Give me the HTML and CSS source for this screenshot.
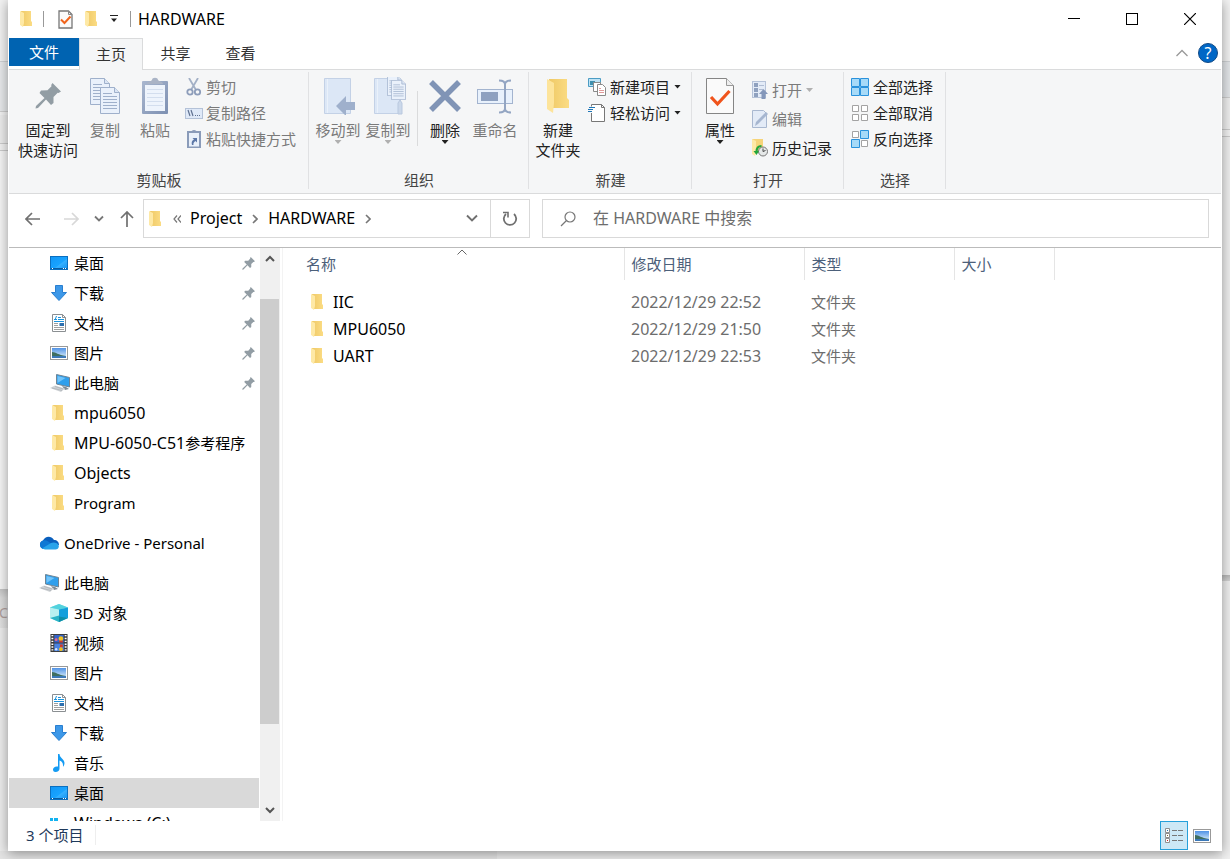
FILE: index.html
```html
<!DOCTYPE html>
<html lang="zh-CN">
<head>
<meta charset="utf-8">
<title>HARDWARE</title>
<link rel="stylesheet" href="styles.css">
</head>
<body>
<svg class="defs" width="0" height="0" aria-hidden="true">
  <defs>
    <linearGradient id="gFold" x1="0" x2="1"><stop offset="0" stop-color="#efc966"/><stop offset="1" stop-color="#fbdc84"/></linearGradient>
    <linearGradient id="gDesk" x1="0" y1="0" x2="1" y2="1"><stop offset="0" stop-color="#1296f5"/><stop offset=".55" stop-color="#18a3ff"/><stop offset=".6" stop-color="#34b0ff"/><stop offset="1" stop-color="#0f8ff0"/></linearGradient>
    <linearGradient id="gSky" x1="0" y1="0" x2="0" y2="1"><stop offset="0" stop-color="#4f92e6"/><stop offset="1" stop-color="#e4f3fb"/></linearGradient>
    <linearGradient id="gClip" x1="0" y1="0" x2="1" y2="1"><stop offset="0" stop-color="#a9b7cf"/><stop offset="1" stop-color="#7d90b2"/></linearGradient>
  </defs>
  <symbol id="folder" viewBox="0 0 14 18"><path d="M2 1h10v10l1 1v4H3z" fill="url(#gFold)"/><path d="M1 1l4 2v10l-1 4-3-2z" fill="#fee9a6"/></symbol>
  <symbol id="desktop" viewBox="0 0 18 14"><rect x=".5" y=".5" width="17" height="13" fill="url(#gDesk)" stroke="#0a6fc0"/><path d="M1 12.5h16" stroke="#0b5ca0"/><path d="M2 12.5h1M13 12.5h1M15 12.5h1" stroke="#fff"/></symbol>
  <symbol id="down" viewBox="0 0 18 18"><path d="M5.500 1.500h7v7h4L9 16.500 1.500 8.500h4z" fill="#3d98e8" stroke="#2a7fd0"/></symbol>
  <symbol id="doc" viewBox="0 0 18 18"><path d="M2.500.5h10l3 3v14h-13z" fill="#fff" stroke="#8b8f92"/><path d="M12.500.5v3h3" fill="none" stroke="#8b8f92"/><path d="M8 3.500h3M4 5.500h3M8 5.500h6M4 7.500h10M6.500 2L5 6" stroke="#1c93dc"/><path d="M4 9.500h4M4 11.500h4M4 13.500h10M4 15.500h10" stroke="#a0a0a0"/><rect x="9.500" y="9" width="4.500" height="3" fill="#2d6fae"/></symbol>
  <symbol id="pic" viewBox="0 0 18 14"><rect x=".5" y=".5" width="17" height="13" fill="#fff" stroke="#999"/><rect x="2" y="2" width="14" height="10" fill="url(#gSky)"/><path d="M2 6c4 0 6 3 14 4H2z" fill="#3f6e60"/><path d="M2 10h14v2H2z" fill="#3b78b8"/></symbol>
  <symbol id="pc" viewBox="0 0 20 18"><path d="M6.500.5l13 3v9.500l-13-3z" fill="#2f9fec" stroke="#6f8494"/><path d="M7.500 2l8 2-8 5z" fill="#72c4fa"/><path d="M12 12l4 1 3 2-4 1z" fill="#7e8a94"/><path d="M0 14l5-2.500 10 3L11 18z" fill="#cfd3d6"/><path d="M2 14l10 2.500M5 12.500l8 2.500" stroke="#a7adb3" stroke-width=".7"/></symbol>
  <symbol id="pin" viewBox="0 0 26 26"><path d="M17.500 0L26 8.500l-2.500 1.500-.8-.2-4.200 4.200 0 6-2.500 2-5-5.500L3 25l-2.500.5L1 23l8.500-8L4.500 10l1.500-2.500 6.500-.2L16.500 3.200l-.3-1.200z" fill="#929da4"/></symbol>
  <symbol id="cube" viewBox="0 0 18 18"><path d="M9 0l9 3.500v10.500l-9 4-9-4V3.500z" fill="#8fe3ea"/><path d="M0 3.500l9 2V13l-9 1z" fill="#b8f0f0"/><path d="M0 3.500L9 0l9 3.500-9 2z" fill="#53d2dd"/><path d="M0 14l9-2.500 9 2.500-9 4z" fill="#2ab4c6"/><path d="M9 12v6l9-4-4-1.500z" fill="#0f8ea8"/><path d="M9 5.500l9-2v10.500l-9-1.500z" fill="#149fdc"/></symbol>
  <symbol id="film" viewBox="0 0 18 19"><rect width="18" height="19" fill="#3b3b3b"/><path d="M2 1v18M16 1v18" stroke="#fff" stroke-width="2" stroke-dasharray="1.500 1.500"/><rect x="4" y="1" width="10" height="8" fill="#3463c8"/><rect x="4" y="10" width="10" height="8" fill="#4a83e0"/><circle cx="11" cy="5" r="2.500" fill="#f0c020"/><path d="M9 7h4v2H9z" fill="#d03a2a"/><circle cx="6" cy="6" r="1.500" fill="#e86a8a"/><path d="M10 11h3v3h-3z" fill="#d03a2a"/><circle cx="11" cy="16" r="2" fill="#f0c020"/><circle cx="6" cy="16" r="1.300" fill="#cfe2ff"/></symbol>
  <symbol id="note" viewBox="0 0 14 18"><path d="M6 0h1.500c0 4 5 5 5 9 0 2-1 3-1.500 4 .3-4-1-5.500-3.500-6.500v8c0 2-1.500 3.500-4 3.500C1.500 18 1 16.500 1 15.500 1 13.500 3 12 6 12.500z" fill="#149bf3"/></symbol>
  <symbol id="cloud" viewBox="0 0 20 14"><path d="M5 13a5 4.500 0 0 1-1-8.500C6 0 12-1 15 4c3 0 5 2 5 5z" fill="#0a5fbd"/><path d="M4 4.500c3-1 5 .5 8 3L6 13H4A4.500 4.500 0 0 1 4 4.500z" fill="#0f78d4"/><path d="M3 12.500L12 7c2-1 6-1 7.500 2 1 3-1 4.500-3 4.500H6z" fill="#28a3ea"/></symbol>
  <symbol id="check" viewBox="0 0 28 36"><path d="M.5.5h20l7 7v28H.5z" fill="#fafafa" stroke="#858585"/><path d="M20.500.5v7h7" fill="#eee" stroke="#999"/><path d="M5 19l6.500 7L23.500 13" fill="none" stroke="#f0541c" stroke-width="3.200"/></symbol>
  <symbol id="check-small" viewBox="0 0 15 19"><path d="M1 1h9.500L14 4.500V18H1z" fill="#fafafa" stroke="#777" stroke-width="1.300"/><path d="M10.500 1v3.500H14" fill="none" stroke="#888"/><path d="M3 9.500l3.500 3.500 6-6.500" fill="none" stroke="#f0641c" stroke-width="2"/></symbol>
  <symbol id="sheet" viewBox="0 0 20 27"><path d="M.5.5h14l5 5v21H.5z" fill="#eaf1fb" stroke="#9fb0cb"/><path d="M14.500.5v5h5" fill="#dbe5f4" stroke="#9fb0cb"/><path d="M3 6.500h9M3 9.500h14M3 12.500h14M3 15.500h14M3 18.500h14M3 21.500h14" stroke="#9fb0cb"/></symbol>
</svg>

<div class="backdrop" aria-hidden="true">
  <div class="strip left"><span>C</span></div>
  <div class="strip right"></div>
  <div class="strip bottom"></div>
</div>

<main class="window">
  <header class="titlebar">
    <svg class="i-folder"><use href="#folder"/></svg>
    <i class="bar"></i>
    <button class="plain qa" aria-label="属性"><svg class="i-check-s"><use href="#check-small"/></svg></button>
    <button class="plain qa2" aria-label="新建文件夹"><svg class="i-folder"><use href="#folder"/></svg></button>
    <button class="plain qa3" aria-label="自定义"><svg width="8" height="8" viewBox="0 0 8 8"><path d="M0 .5h8" stroke="#222"/><path d="M1 3.500h6L4 7z" fill="#222"/></svg></button>
    <i class="bar last"></i>
    <h1 class="en">HARDWARE</h1>
    <div class="controls">
      <button class="plain" aria-label="最小化"><svg width="12" height="12"><path d="M0 5.500h12" stroke="#000"/></svg></button>
      <button class="plain" aria-label="最大化"><svg width="12" height="12"><rect x=".5" y=".5" width="11" height="11" fill="none" stroke="#000"/></svg></button>
      <button class="plain" aria-label="关闭"><svg width="12" height="12"><path d="M0 0l12 12M12 0L0 12" stroke="#000" stroke-width="1.200"/></svg></button>
    </div>
  </header>

  <nav class="tabs">
    <button class="tab file">文件</button>
    <button class="tab active">主页</button>
    <button class="tab">共享</button>
    <button class="tab">查看</button>
    <div class="tab-tools">
      <button class="plain" aria-label="折叠"><svg width="12" height="8"><path d="M.5 7L6 1.500 11.500 7" fill="none" stroke="#999" stroke-width="1.300"/></svg></button>
      <button class="help" aria-label="帮助">?</button>
    </div>
  </nav>

  <section class="ribbon">
    <div class="group g1">
      <div class="tools">
        <button class="big wide"><span class="pic"><svg width="26" height="26"><use href="#pin"/></svg></span>固定到<br>快速访问</button>
        <button class="big off"><span class="pic"><svg width="32" height="38"><use href="#sheet" width="20" height="27" x="1" y="1"/><use href="#sheet" width="20" height="27" x="11" y="10"/></svg></span>复制</button>
        <button class="big off"><span class="pic"><svg width="28" height="38"><rect x="1" y="4" width="26" height="33" rx="1" fill="url(#gClip)"/><rect x="4" y="8" width="20" height="26" fill="#eef4fc"/><path d="M6 12.500h16M6 16.500h16M6 20.500h16M6 24.500h16M6 28.500h16" stroke="#d3deee"/><path d="M6 7c0-3 4-2 5-4 0-3 6-3 6 0 1 2 5 1 5 4z" fill="#aab4c6"/></svg></span>粘贴</button>
        <div class="stack">
          <button class="small off"><svg width="18" height="18" viewBox="0 0 18 18"><path d="M4 0l7 12M13 0L6 12" stroke="#a3b0c6" stroke-width="1.800"/><circle cx="5" cy="14" r="2.700" fill="none" stroke="#8d9dba" stroke-width="1.800"/><circle cx="12.500" cy="14" r="2.700" fill="none" stroke="#8d9dba" stroke-width="1.800"/></svg>剪切</button>
          <button class="small off"><svg width="18" height="18" viewBox="0 0 18 18"><rect x=".5" y="4.500" width="17" height="10" fill="#dfe9f8" stroke="#b4c2d8"/><path d="M3 6l2 6M6 6l2 6M10 11.500h1M12 11.500h1M14 11.500h1" stroke="#5f7191" stroke-width="1.200"/></svg>复制路径</button>
          <button class="small off"><svg width="18" height="18" viewBox="0 0 18 18"><path d="M3 2h12v15.500H3z" fill="#e9f0fa" stroke="#8a9bb9" stroke-width="2"/><path d="M6 3c0-4 6-4 6 0z" fill="#8a9bb9"/><path d="M7 15c-1-4 1-5 2-5.500L7.500 8H12v4.500L10.500 11C9 12 8 13 8.500 15z" fill="#5d78a8"/></svg>粘贴快捷方式</button>
        </div>
      </div>
      <h2>剪贴板</h2>
    </div>

    <div class="group g2">
      <div class="tools">
        <button class="big off"><span class="pic"><svg width="34" height="38"><path d="M3.500 1.500h26v35h-26z" fill="#dce7f6" stroke="#c3d1e6"/><path d="M6.500 2v34" stroke="#eaf1fa"/><path d="M34 25v8h-9v6L15 29l10-10v6z" fill="#9fb0cc"/></svg></span>移动到<i class="caret"></i></button>
        <button class="big off"><span class="pic"><svg width="36" height="38"><path d="M4.500 1.500h26v35h-26z" fill="#dce7f6" stroke="#c3d1e6"/><path d="M7.500 2v34" stroke="#eaf1fa"/><path d="M28 26l2-3 2 3v11h-4z" fill="#cbd8ea" stroke="#b9c8df"/><use href="#sheet" width="15" height="20" x="17" y="-1"/><use href="#sheet" width="15" height="20" x="21" y="3"/></svg></span>复制到<i class="caret"></i></button>
        <i class="divide"></i>
        <button class="big"><span class="pic"><svg width="34" height="34"><path d="M3 3l28 28M31 3L3 31" stroke="#8094b6" stroke-width="5.500"/></svg></span>删除<i class="caret"></i></button>
        <button class="big off"><span class="pic"><svg width="38" height="36"><rect x="1.500" y="11.500" width="35" height="14" fill="#e8f1fc" stroke="#a3b4cf"/><path d="M5 14h17v9H5z" fill="#8ea1c0"/><path d="M23 2.500c4 0 6 1 6 4v24c0 3-2 4-6 4M35 2.500c-4 0-6 1-6 4v24c0 3 2 4 6 4" fill="none" stroke="#93a5c2" stroke-width="2"/></svg></span>重命名</button>
      </div>
      <h2>组织</h2>
    </div>

    <div class="group g3">
      <div class="tools">
        <button class="big"><span class="pic"><svg width="27" height="36"><path d="M4 1h18v19l2 2v8H5z" fill="url(#gFold)"/><path d="M2 1l7 4v20l-1 10-6-4z" fill="#fde49b"/></svg></span>新建<br>文件夹</button>
        <div class="stack">
          <button class="small"><svg width="18" height="18" viewBox="0 0 18 18"><path d="M.5.5h12v8H.5z" fill="#bfe3f5" stroke="#4b9cc4"/><path d="M2 3h5v4H2z" fill="#3f8fae"/><path d="M5.500 4.500h7v9h-7z" fill="#fff" stroke="#8a8a8a"/><path d="M9.500 6.500h5l3 3v8h-8z" fill="#fff" stroke="#8a8a8a"/><path d="M11 10.500h2M11 12.500h5M11 14.500h5" stroke="#e09a9a"/></svg>新建项目<i class="caret after"></i></button>
          <button class="small"><svg width="18" height="18" viewBox="0 0 18 18"><path d="M3.500 2.500V.5h10l3 3v14h-13V9" fill="#fff" stroke="#777"/><path d="M13.500.5v3h3" fill="none" stroke="#777"/><path d="M1 3.500h6M0 5.500h5M0 7.500h4" stroke="#1f77b8"/></svg>轻松访问<i class="caret after"></i></button>
        </div>
      </div>
      <h2>新建</h2>
    </div>

    <div class="group g4">
      <div class="tools">
        <button class="big"><span class="pic"><svg width="28" height="36"><use href="#check"/></svg></span>属性<i class="caret"></i></button>
        <div class="stack tall">
          <button class="small off"><svg width="16" height="18" viewBox="0 0 16 18"><rect x=".5" y=".5" width="13" height="16" fill="#e3ebf7" stroke="#b5c2d8"/><path d="M2 2h4v4H2zM2 7h4v4H2zM2 12h4v4H2z" fill="#8fa1bf"/><path d="M7 4.500h5M7 8.500h4" stroke="#b0bdd3"/><path d="M11.500 8l4.500 5h-2.500v5h-4v-5H7z" fill="#8497ba"/></svg>打开<i class="caret after"></i></button>
          <button class="small off"><svg width="16" height="18" viewBox="0 0 16 18"><path d="M.5.5h11l3 3v14H.5z" fill="#e3ebf7" stroke="#a9b8d0"/><path d="M3 16l1-4L14 2l2 2L6 14z" fill="#a6b6d0"/></svg>编辑</button>
          <button class="small"><svg width="16" height="18" viewBox="0 0 16 18"><path d="M0 0h11v14H2z" fill="#f6d47a"/><path d="M0 0l4 2v12l-1 3-3-2z" fill="#fee9a6"/><circle cx="11" cy="12.500" r="4.500" fill="#e5e8e8" stroke="#777"/><path d="M11 9.500v3l2.500-1" fill="none" stroke="#444"/><path d="M4.500 13c0-4 2-6 5-6" fill="none" stroke="#22a53b" stroke-width="2.200"/><path d="M1.500 12H7l-2.500 4z" fill="#22a53b"/></svg>历史记录</button>
        </div>
      </div>
      <h2>打开</h2>
    </div>

    <div class="group g5">
      <div class="tools">
        <div class="stack">
          <button class="small"><svg width="18" height="18"><path d="M.5.5h8v8h-8zM9.500.5h8v8h-8zM.5 9.500h8v8h-8zM9.500 9.500h8v8h-8z" fill="#a6daf8" stroke="#2a92dc"/></svg>全部选择</button>
          <button class="small"><svg width="18" height="18"><path d="M1.500 1.500h6v6h-6zM10.500 1.500h6v6h-6zM1.500 10.500h6v6h-6zM10.500 10.500h6v6h-6z" fill="#fff" stroke="#a3a3a3"/></svg>全部取消</button>
          <button class="small"><svg width="18" height="18"><path d="M1.500 1.500h6v6h-6zM10.500 10.500h6v6h-6z" fill="#fff" stroke="#a3a3a3"/><path d="M9.500.5h8v8h-8zM.5 9.500h8v8h-8z" fill="#a6daf8" stroke="#2a92dc"/></svg>反向选择</button>
        </div>
      </div>
      <h2>选择</h2>
    </div>
  </section>

  <div class="navrow">
    <div class="arrows">
      <button class="plain" aria-label="后退"><svg width="16" height="14"><path d="M1 7h14M7 1L1 7l6 6" fill="none" stroke="#707070" stroke-width="1.700"/></svg></button>
      <button class="plain" aria-label="前进"><svg width="16" height="14"><path d="M1 7h14M9 1l6 6-6 6" fill="none" stroke="#d8d8d8" stroke-width="1.700"/></svg></button>
      <button class="plain" aria-label="最近"><svg width="10" height="8"><path d="M1 1.500l4 4 4-4" fill="none" stroke="#777" stroke-width="1.800"/></svg></button>
      <button class="plain" aria-label="上移"><svg width="14" height="16"><path d="M7 1v15M1 7l6-6 6 6" fill="none" stroke="#707070" stroke-width="1.700"/></svg></button>
    </div>
    <div class="address">
      <svg class="i-folder"><use href="#folder"/></svg>
      <svg class="dbl" width="8" height="8"><path d="M4 .5L1 4l3 3.500M8 .5L5 4l3 3.500" fill="none" stroke="#777" stroke-width="1.200"/></svg>
      <a href="#project" class="en">Project</a>
      <svg class="sep" width="6" height="10"><path d="M1 1l4 4-4 4" fill="none" stroke="#777" stroke-width="1.600"/></svg>
      <a href="#hardware" class="en">HARDWARE</a>
      <svg class="sep" width="6" height="10"><path d="M1 1l4 4-4 4" fill="none" stroke="#777" stroke-width="1.600"/></svg>
      <button class="plain drop" aria-label="历史"><svg width="12" height="9"><path d="M1 1.500l5 5 5-5" fill="none" stroke="#707070" stroke-width="1.900"/></svg></button>
      <button class="plain reload" aria-label="刷新"><svg width="16" height="16" viewBox="0 0 16 16"><path d="M4 3a6.200 6.200 0 1 0 8 0" fill="none" stroke="#707070" stroke-width="1.800"/><path d="M1 1.500h5v5" fill="none" stroke="#707070" stroke-width="1.600"/></svg></button>
    </div>
    <label class="search">
      <svg width="16" height="16"><circle cx="10" cy="6" r="5" fill="none" stroke="#777" stroke-width="1.200"/><path d="M6.500 9.500L1 15" stroke="#777" stroke-width="1.300"/></svg>
      <input type="text" placeholder="在 HARDWARE 中搜索" aria-label="搜索">
    </label>
  </div>

  <div class="content">
    <aside class="side">
      <ul>
        <li><svg class="ic"><use href="#desktop" height="14" y="2"/></svg>桌面<svg class="pin"><use href="#pin"/></svg></li>
        <li><svg class="ic"><use href="#down"/></svg>下载<svg class="pin"><use href="#pin"/></svg></li>
        <li><svg class="ic"><use href="#doc"/></svg>文档<svg class="pin"><use href="#pin"/></svg></li>
        <li><svg class="ic"><use href="#pic" height="14" y="2"/></svg>图片<svg class="pin"><use href="#pin"/></svg></li>
        <li><svg class="ic"><use href="#pc" width="20" height="18"/></svg>此电脑<svg class="pin"><use href="#pin"/></svg></li>
        <li class="en"><svg class="ic"><use href="#folder" width="14" x="1"/></svg>mpu6050</li>
        <li><svg class="ic"><use href="#folder" width="14" x="1"/></svg><span class="en">MPU-6050-C51</span>参考程序</li>
        <li class="en"><svg class="ic"><use href="#folder" width="14" x="1"/></svg>Objects</li>
        <li><svg class="ic"><use href="#folder" width="14" x="1"/></svg>Program</li>
        <li class="root"><svg class="ic-w"><use href="#cloud"/></svg>OneDrive - Personal</li>
        <li class="root"><svg class="ic-w"><use href="#pc"/></svg>此电脑</li>
        <li><svg class="ic"><use href="#cube"/></svg>3D 对象</li>
        <li><svg class="ic"><use href="#film"/></svg>视频</li>
        <li><svg class="ic"><use href="#pic" height="14" y="2"/></svg>图片</li>
        <li><svg class="ic"><use href="#doc"/></svg>文档</li>
        <li><svg class="ic"><use href="#down"/></svg>下载</li>
        <li><svg class="ic"><use href="#note"/></svg>音乐</li>
        <li class="on"><svg class="ic"><use href="#desktop" height="14" y="2"/></svg>桌面</li>
        <li class="en"><svg class="ic"><path d="M0 4h3v4H0zM4 4h4v4H4z" fill="#12b2f0"/></svg>Windows (C:)</li>
      </ul>
    </aside>
    <div class="scroll">
      <button class="plain" aria-label="向上滚动"><svg width="10" height="8"><path d="M1 6l4-4 4 4" fill="none" stroke="#555" stroke-width="2"/></svg></button>
      <div class="track"><div class="thumb"></div></div>
      <button class="plain" aria-label="向下滚动"><svg width="10" height="8"><path d="M1 2l4 4 4-4" fill="none" stroke="#555" stroke-width="2"/></svg></button>
    </div>
    <div class="files">
      <table>
        <thead>
          <tr><th class="c1">名称<svg class="sort" width="10" height="6"><path d="M.5 5.500L5 1l4.500 4.500" fill="none" stroke="#666"/></svg></th><th class="c2">修改日期</th><th class="c3">类型</th><th class="c4">大小</th><th></th></tr>
        </thead>
        <tbody>
          <tr><td class="en name"><svg class="i-folder"><use href="#folder"/></svg>IIC</td><td class="en">2022/12/29 22:52</td><td>文件夹</td><td></td><td></td></tr>
          <tr><td class="en name"><svg class="i-folder"><use href="#folder"/></svg>MPU6050</td><td class="en">2022/12/29 21:50</td><td>文件夹</td><td></td><td></td></tr>
          <tr><td class="en name"><svg class="i-folder"><use href="#folder"/></svg>UART</td><td class="en">2022/12/29 22:53</td><td>文件夹</td><td></td><td></td></tr>
        </tbody>
      </table>
    </div>
  </div>

  <footer class="status">
    <span>3 个项目</span>
    <div class="views">
      <button class="view on" aria-label="详细信息"><svg width="20" height="18"><path d="M1.500 1.500h4v4h-4zM1.500 6.500h4v4h-4zM1.500 11.500h4v4h-4z" fill="#fff" stroke="#8f8f8f"/><path d="M3 3.500h1" stroke="#2d6fae"/><path d="M3 8.500h1" stroke="#7a6a30"/><path d="M3 13.500h1" stroke="#c22"/><path d="M8 3.500h5M14 3.500h5M8 8.500h5M14 8.500h5M8 13.500h5M14 13.500h5" stroke="#777"/></svg></button>
      <button class="view" aria-label="大缩略图"><svg width="18" height="14"><use href="#pic"/></svg></button>
    </div>
  </footer>
</main>
</body>
</html>
```

FILE: styles.css
```css
* { box-sizing: border-box; }
body {
  margin: 0;
  height: 100vh;
  display: flex;
  overflow: hidden;
  padding: 0 8px 8px;
  font: 15px/20px "Noto Sans", "Noto Sans CJK SC", sans-serif;
  color: #000;
  background: #ececec;
}
.en { font-size: 16px; }
button { font: inherit; color: inherit; border: 0; padding: 0; background: none; }
.plain { display: flex; align-items: center; justify-content: center; }
svg { display: block; flex: none; }
.defs { position: absolute; }
h1, h2 { margin: 0; font-weight: 400; }

.backdrop { position: absolute; inset: 0; overflow: hidden; }
.strip { position: absolute; }
.strip.left {
  left: 0; top: 0; bottom: 0; width: 8px; overflow: hidden;
  background: linear-gradient(#f3f3f3 61px, #d0d3d6 61px 62px, #e8eaec 62px 111px, #cfcfcf 111px 112px, #f3f3f3 112px 115px, #ededed 115px 143px, #ccc 143px 144px, #f3f3f3 144px 150px, #ccc 150px 151px, #f6f6f6 151px 589px, #c4c4c4 589px, #dcdcdc 598px, #e2e2e2 628px, #ededed 628px);
}
.strip.left span { display: block; margin: 603px 0 0 -1px; font-size: 14px; color: #b0a09c; }
.strip.right {
  right: 0; top: 0; bottom: 0; width: 8px;
  background: linear-gradient(#f3f3f3 61px, #d0d3d6 61px 62px, #e4e7ea 62px 97px, #cfcfcf 97px 98px, #f0f0f0 98px 129px, #ccc 129px 130px, #f3f3f3 130px 136px, #ccc 136px 137px, #f0f0f0 137px 575px, #b8b8b8 575px, #d4d4d4 581px, #f0f0f0 581px);
}
.strip.bottom { left: 0; bottom: 0; width: 497px; height: 8px; background: #e4e4e4; }

.window {
  position: relative;
  flex: 1;
  min-width: 0;
  display: flex;
  flex-direction: column;
  padding: 0 1px;
  background: #fff;
  box-shadow: 0 2px 12px rgba(0, 0, 0, .4);
}

.titlebar { display: flex; align-items: center; height: 38px; padding-left: 10px; }
.i-folder { width: 14px; height: 18px; }
.bar { width: 1px; height: 16px; margin-left: 10px; background: #999; }
.bar.last { margin: 0 7px 0 12px; }
.qa { margin-left: 14px; }
.i-check-s { width: 15px; height: 19px; }
.qa2 { margin-left: 11px; }
.qa3 { margin-left: 12px; }
.controls { margin-left: auto; padding-right: 2px; display: flex; }
.controls button { width: 58px; height: 38px; }

.tabs { display: flex; height: 32px; border-bottom: 1px solid #dadbdc; }
.tab { width: 65px; height: 32px; padding-bottom: 2px; color: #333; }
.tab.file { width: 70px; height: 28px; padding: 0; background: #0063b1; color: #fff; }
.tab.active { width: 64px; border: 1px solid #dadbdc; border-bottom: 0; background: #f5f6f7; }
.tab-tools { margin-left: auto; display: flex; align-items: center; gap: 10px; padding: 0 3px 2px 0; }
.help {
  width: 20px; height: 20px; border-radius: 50%;
  border: 1px solid #124a86; background: #0067c6; color: #fff;
  font-size: 16px; line-height: 18px;
}

.ribbon { display: flex; height: 124px; background: #f5f6f7; border-bottom: 1px solid #dadbdc; }
.group { display: flex; flex-direction: column; position: relative; padding-top: 4px; }
.group::after { content: ""; position: absolute; right: 0; top: 2px; bottom: 4px; width: 1px; background: #e0e1e3; }
.group h2 { font-size: 15px; text-align: center; color: #444; margin-top: auto; padding-bottom: 3px; }
.tools { display: flex; align-items: flex-start; }
.g1 { width: 300px; }
.g1 .tools { padding-left: 7px; }
.g2 { width: 220px; }
.g2 .tools { padding-left: 4px; }
.g3 { width: 163px; }
.g3 .tools { padding-left: 4px; }
.g4 { width: 152px; }
.g4 .tools { padding-left: 3px; }
.g5 { width: 102px; }
.g5 .tools { padding-left: 2px; }
.big { flex: none; width: 50px; display: block; color: #222; white-space: nowrap; padding-top: 2px; }
.big.wide { width: 64px; }
.pic { display: flex; height: 44px; padding-bottom: 4px; align-items: center; justify-content: center; }
.off { color: #7a7a7a; }
.caret { display: block; width: 7px; height: 4px; margin: 0 auto; background: #222; clip-path: polygon(0 0, 100% 0, 50% 100%); }
.off .caret { background: #b0b0b0; }
.stack { margin-left: 5px; }
.small { display: flex; align-items: center; gap: 4px; height: 26px; padding-bottom: 1px; color: #222; white-space: nowrap; }
.g1 .small { gap: 3px; }
.g4 .stack { padding-top: 2px; margin-left: 7px; }
.tall .small { height: 29px; }
.small.off { color: #7a7a7a; }
.caret.after { margin: 0; }
.divide { width: 1px; height: 55px; margin: 17px 2px 0 4px; background: #dadbdc; }

.navrow { display: flex; align-items: center; height: 54px; padding: 0 12px 4px 0; border-bottom: 1px solid #bbb; }
.arrows { display: flex; align-items: center; width: 134px; padding: 0 9px 0 16px; justify-content: space-between; }
.arrows button:first-child { margin-right: 6px; }
.address { display: flex; align-items: center; width: 387px; height: 39px; border: 1px solid #d9d9d9; padding-left: 4px; }
.address a { color: #000; text-decoration: none; padding-bottom: 2px; }
.dbl { margin: 0 9px 0 11px; }
.sep { margin: 0 10px; }
.drop { width: 36px; height: 37px; margin-left: auto; }
.reload { width: 39px; height: 37px; border-left: 1px solid #d9d9d9; }
.search { flex: 1; min-width: 0; display: flex; align-items: center; gap: 17px; height: 39px; margin-left: 12px; padding-left: 17px; border: 1px solid #d9d9d9; }
.search input { flex: 1; min-width: 0; border: 0; outline: 0; padding: 0 0 2px; font: inherit; font-size: 16px; }
.search input::placeholder { color: #6d6d6d; opacity: 1; }

.content { flex: 1; min-height: 0; display: flex; }
.side { width: 250px; overflow: hidden; }
.side ul { list-style: none; margin: 0; padding: 0; }
.side li { display: flex; align-items: center; height: 30px; padding-left: 41px; white-space: nowrap; }
.side li.root { padding-left: 30px; margin: 10px 0; }
.side li.root + .root { margin-top: 0; }
.side li.root + li:not(.root) { margin-top: -10px; }
.side li.on { background: #d9d9d9; }
.ic { width: 18px; height: 18px; margin-right: 6px; overflow: visible; }
.ic-w { width: 20px; height: 18px; margin-right: 5px; }
.side .pin { width: 13px; height: 13px; margin: 0 4px 0 auto; }
.scroll { width: 20px; margin-left: 1px; display: flex; flex-direction: column; background: #f0f0f0; }
.scroll button { height: 22px; width: 19px; }
.track { flex: 1; padding-top: 29px; }
.thumb { width: 19px; height: 85%; max-height: 425px; background: #cdcdcd; }
.files { flex: 1; min-width: 0; margin-left: 2px; border-left: 1px solid #f3f3f3; }
table { width: 100%; border-collapse: collapse; table-layout: fixed; }
th { position: relative; height: 32px; padding: 0 0 0 7px; font-weight: 400; text-align: left; color: #4c607a; border-right: 1px solid #e5e5e5; }
th:last-child { border: 0; }
.c1 { width: 341px; padding-left: 23px; }
.c2 { width: 180px; }
.c3 { width: 150px; }
.c4 { width: 100px; }
.sort { position: absolute; top: 1px; left: 51%; }
tbody::before { content: ""; display: block; height: 8px; }
td { height: 27px; padding: 0 0 0 7px; color: #6d6d6d; }
td.name { display: flex; align-items: center; gap: 9px; padding-left: 27px; color: #000; }

.status { display: flex; align-items: flex-start; height: 30px; padding: 0 5px 0 17px; color: #1e395b; }
.status span { margin-top: 4px; padding-right: 12px; border-right: 1px solid #eee; }
.views { margin-left: auto; display: flex; }
.view { width: 28px; height: 29px; display: flex; align-items: center; justify-content: center; }
.view.on { border: 1px solid #26a0da; background: #cce8f6; }
```
